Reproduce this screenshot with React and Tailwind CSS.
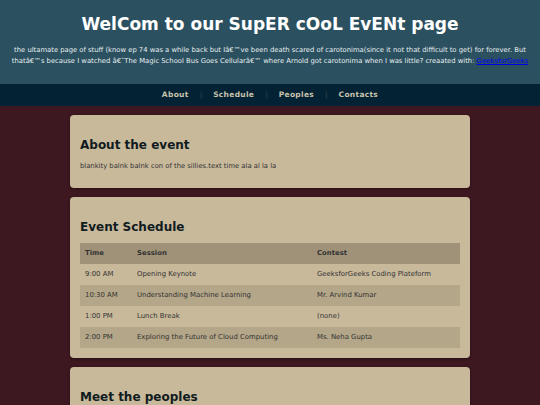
import React from 'react';

const schedule = [
  { time: '9:00 AM', session: 'Opening Keynote', contest: 'GeeksforGeeks Coding Plateform' },
  { time: '10:30 AM', session: 'Understanding Machine Learning', contest: 'Mr. Arvind Kumar' },
  { time: '1:00 PM', session: 'Lunch Break', contest: '(none)' },
  { time: '2:00 PM', session: 'Exploring the Future of Cloud Computing', contest: 'Ms. Neha Gupta' },
];

const navItems = ['About', 'Schedule', 'Peoples', 'Contacts'];

function Card({ title, children }) {
  return (
    <section className="w-[400px] mx-auto rounded-[4px] bg-[#c8b99b] px-[10px] pt-[10px] pb-[10px] shadow-[0_1px_3px_rgba(0,0,0,0.4)]">
      <h2 className="mt-[12px] mb-[7px] text-[12px] leading-[17px] font-bold text-[#101b20]">{title}</h2>
      {children}
    </section>
  );
}

export default function App() {
  return (
    <div className="min-h-screen bg-[#3e1820] font-['DejaVu_Sans',sans-serif] pb-6">
      {/* Header */}
      <header className="bg-[#2b505f] text-white text-center px-[10px] pt-[11px] pb-[17px]">
        <h1 className="text-[17px] leading-[26px] font-bold">WelCom to our SupER cOoL EvENt page</h1>
        <p className="mt-[8px] text-[6.8px] leading-[11px] text-[#e6eef0]">
          the ultamate page of stuff (know ep 74 was a while back but Iâ€™ve been death scared of carotonima(since it not that difficult to get) for forever. But thatâ€™s because I watched â€˜The Magic School Bus Goes Cellularâ€™ where Arnold got carotonima when I was little? creaated with:{' '}
          <a href="#" className="text-[#0000ee] underline">GeeksforGeeks</a>
        </p>
      </header>

      {/* Nav */}
      <nav className="bg-[#032233] h-[22px] flex items-center justify-center gap-[11px] text-[7.5px] font-bold text-[#c9c2ad]">
        {navItems.map((item, i) => (
          <React.Fragment key={item}>
            {i > 0 && <span className="text-[#33434c] font-normal">|</span>}
            <a href="#" className="tracking-[0.3px]">{item}</a>
          </React.Fragment>
        ))}
      </nav>

      <main className="pt-[9px] flex flex-col gap-[9px]">
        <Card title="About the event">
          <p className="text-[6.8px] leading-[10px] text-[#333333] pb-[7px]">blankity balnk balnk con of the sillies.text time ala al la la</p>
        </Card>

        <Card title="Event Schedule">
          <table className="w-full border-collapse text-[6.9px] text-[#333333] text-left">
            <thead>
              <tr className="bg-[#9f9278] h-[21px]">
                <th className="w-[52px] pl-[5px] font-bold">Time</th>
                <th className="w-[180px] pl-[5px] font-bold">Session</th>
                <th className="pl-[5px] font-bold">Contest</th>
              </tr>
            </thead>
            <tbody>
              {schedule.map((row, i) => (
                <tr key={row.time} className={`h-[21px] ${i % 2 === 1 ? 'bg-[#b4a688]' : ''}`}>
                  <td className="pl-[5px]">{row.time}</td>
                  <td className="pl-[5px]">{row.session}</td>
                  <td className="pl-[5px]">{row.contest}</td>
                </tr>
              ))}
            </tbody>
          </table>
        </Card>

        <Card title="Meet the peoples">
          <p className="text-[7px] leading-[10px] text-[#333333] pb-[40px]"></p>
        </Card>
      </main>
    </div>
  );
}
